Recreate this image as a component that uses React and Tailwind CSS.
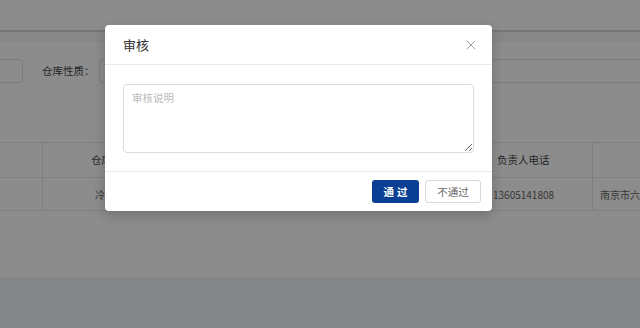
import { X } from "lucide-react";

const font = { fontFamily: '"Noto Sans CJK SC", "Noto Sans", sans-serif' };

const Page = () => (
    <div className="w-[640px] h-[328px] bg-white flex flex-col overflow-hidden text-[#555]">
        {/* top bar */}
        <div className="h-[32px] shrink-0 bg-white border-b-2 border-[#d8d8d8]" />
        <div className="h-[10px] shrink-0 bg-[#f6f6f6]" />

        {/* filter row */}
        <div className="h-[17px] shrink-0" />
        <div className="flex items-center h-[24px] shrink-0">
            <div className="w-[23px] h-full border border-[#e2e2e2] border-l-0 rounded-r" />
            <span className="ml-[19px] w-[57px] text-[10.5px] text-[#444]">仓库性质：</span>
            <div className="flex-1 h-full border border-[#e2e2e2] border-r-0 rounded-l" />
        </div>

        <div className="h-[59px] shrink-0" />

        {/* table */}
        <div className="shrink-0 border-t border-[#e8e8e8]">
            <div className="flex h-[35px] border-b border-[#e8e8e8] text-[10.5px] text-[#444]">
                <div className="w-[43px] shrink-0 border-r border-[#e8e8e8]" />
                <div className="w-[138px] shrink-0 border-r border-[#e8e8e8] flex items-center pl-[48px]">仓库名称</div>
                <div className="w-[138px] shrink-0 border-r border-[#e8e8e8]" />
                <div className="w-[136px] shrink-0 border-r border-[#e8e8e8]" />
                <div className="w-[138px] shrink-0 border-r border-[#e8e8e8] flex items-center pl-[42px]">负责人电话</div>
                <div className="flex-1" />
            </div>
            <div className="flex h-[33px] border-b border-[#e8e8e8] text-[10px] text-[#666]">
                <div className="w-[43px] shrink-0 border-r border-[#e8e8e8]" />
                <div className="w-[138px] shrink-0 border-r border-[#e8e8e8] flex items-center pl-[52px]">冷藏库</div>
                <div className="w-[138px] shrink-0 border-r border-[#e8e8e8]" />
                <div className="w-[136px] shrink-0 border-r border-[#e8e8e8]" />
                <div className="w-[138px] shrink-0 border-r border-[#e8e8e8] flex items-center pl-[38px]">13605141808</div>
                <div className="flex-1 flex items-center pl-[7px] whitespace-nowrap">南京市六合区</div>
            </div>
        </div>

        <div className="h-[66px] shrink-0" />
        <div className="flex-1 bg-[#f1f3f6]" />
    </div>
);

export default function App() {
    return (
        <div className="relative w-[640px] h-[328px] overflow-hidden" style={font}>
            <Page />

            {/* mask */}
            <div className="absolute inset-0 bg-black/45" />

            {/* modal */}
            <div className="absolute left-[105px] top-[25px] w-[387px] bg-white rounded shadow-[0_4px_12px_rgba(0,0,0,0.2)]">
                <div className="h-[40px] flex items-center justify-between pl-[18px] pr-[13px] border-b border-[#e9e9e9]">
                    <span className="text-[13px] text-[#333]">审核</span>
                    <X className="w-[16px] h-[16px] text-[#888]" strokeWidth={1.2} />
                </div>
                <div className="px-[18px] pt-[19px] pb-[18px]">
                    <textarea
                        placeholder="审核说明"
                        className="block w-full h-[69px] border border-[#dcdcdc] rounded-sm px-[8px] py-[5px] text-[10.5px] text-[#333] placeholder:text-[#bbb] outline-none resize-y"
                    />
                </div>
                <div className="h-[40px] border-t border-[#e9e9e9] flex items-center justify-end gap-[6px] pr-[11px]">
                    <button className="w-[47px] h-[23px] rounded-[3px] bg-[#0b3f94] text-white text-[10.5px] font-bold tracking-[3px] pl-[3px]">通过</button>
                    <button className="w-[56px] h-[23px] rounded-[3px] border border-[#d9d9d9] bg-white text-[#666] text-[10.5px]">不通过</button>
                </div>
            </div>
        </div>
    );
}
